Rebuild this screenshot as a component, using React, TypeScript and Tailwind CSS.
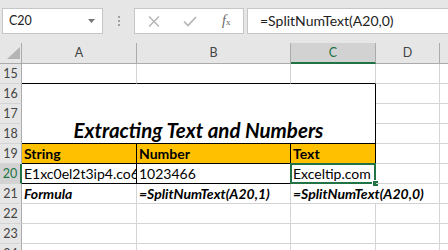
import React from "react";

const G = "border-[#d4d4d4]";

function RowHdr({ n, sel, className = "" }: { n: number; sel?: boolean; className?: string }) {
  return (
    <div
      className={
        "border-b border-[#d4d4d4] text-center text-[12.5px] leading-[19px] " +
        (sel
          ? "bg-[#d2d2d2] text-[#217346] border-r-2 border-r-[#217346] "
          : "bg-[#e6e6e6] text-[#444] border-r border-r-[#ababab] ") +
        className
      }
    >
      {n}
    </div>
  );
}

function C({ children, className = "" }: { children?: React.ReactNode; className?: string }) {
  return (
    <div
      className={
        "relative whitespace-nowrap px-[2px] text-[14px] leading-[19px] text-black " + className
      }
    >
      {children}
    </div>
  );
}

export default function App() {
  return (
    <div className="w-[448px] h-[250px] overflow-hidden bg-white font-[Lato,sans-serif]">
      {/* formula bar */}
      <div className="h-[43px] bg-[#e6e6e6] flex items-start pt-[8px] pl-[2px]">
        <div className="w-[101px] h-[26px] bg-white border border-[#c6c6c6] flex items-center justify-between pl-[6px] pr-[7px]">
          <span className="text-[12.5px] text-[#222] leading-none">C20</span>
          <svg width="7" height="4" viewBox="0 0 7 4">
            <polygon points="0,0 7,0 3.5,4" fill="#777" />
          </svg>
        </div>
        <div className="w-[31px] h-[26px] flex flex-col items-center justify-center gap-[2px]">
          <span className="w-[2px] h-[2px] bg-[#a0a0a0]" />
          <span className="w-[2px] h-[2px] bg-[#a0a0a0]" />
          <span className="w-[2px] h-[2px] bg-[#a0a0a0]" />
        </div>
        <div className="w-[110px] h-[26px] bg-white border border-[#c6c6c6] relative flex items-center">
          <svg className="ml-[13px]" width="12" height="11" viewBox="0 0 12 11">
            <path d="M1 0.5 L11 10.5 M11 0.5 L1 10.5" stroke="#b3b3b3" strokeWidth="1.4" fill="none" />
          </svg>
          <svg className="ml-[23px]" width="14" height="11" viewBox="0 0 14 11">
            <path d="M1 5.5 L5 9.5 L13 1" stroke="#b3b3b3" strokeWidth="1.6" fill="none" />
          </svg>
          <span className="ml-[25px] text-[14px] text-[#666] italic font-['Liberation_Serif',serif] leading-none">
            f<span className="text-[9px] not-italic">x</span>
          </span>
        </div>
        <div className="ml-[3px] flex-1 h-[26px] bg-white border border-[#c6c6c6] border-r-0 flex items-center pl-[12px]">
          <span className="text-[14px] text-[#222] leading-none">=SplitNumText(A20,0)</span>
        </div>
      </div>

      {/* sheet */}
      <div className="grid grid-cols-[22px_115px_154px_85px_64px_1fr] grid-rows-[21px_repeat(10,20px)]">
        {/* header row */}
        <div className="bg-[#e6e6e6] border-r border-b border-[#ababab] relative">
          <svg className="absolute left-0 top-0" width="21" height="20" viewBox="0 0 21 20">
            <polygon points="20,4 20,16 7,16" fill="#b4b4b4" />
          </svg>
        </div>
        <div className="bg-[#e6e6e6] border-r border-b border-[#ababab] text-center text-[12.5px] leading-[20px] text-[#444]">A</div>
        <div className="bg-[#e6e6e6] border-r border-b border-[#ababab] text-center text-[12.5px] leading-[20px] text-[#444]">B</div>
        <div className="bg-[#d2d2d2] border-r border-r-[#ababab] border-b-2 border-b-[#217346] text-center text-[12.5px] leading-[19px] text-[#217346]">C</div>
        <div className="bg-[#e6e6e6] border-r border-b border-[#ababab] text-center text-[12.5px] leading-[20px] text-[#444]">D</div>
        <div className="bg-[#e6e6e6] border-b border-[#ababab]" />

        {/* row 15 */}
        <RowHdr n={15} />
        <C className={`border-r ${G} border-b border-b-black`} />
        <C className={`border-r ${G} border-b border-b-black`} />
        <C className={`border-r ${G} border-b border-b-black`} />
        <C className={`border-r border-b ${G}`} />
        <C className={`border-b ${G}`} />

        {/* row 16-18 */}
        <RowHdr n={16} />
        <div className="col-span-3 row-span-3 border-r border-b border-black flex items-end justify-center pb-[2px]">
          <span className="text-[20.5px] font-bold italic leading-[22px] text-black">Extracting Text and Numbers</span>
        </div>
        <C className={`border-r border-b ${G}`} />
        <C className={`border-b ${G}`} />
        <RowHdr n={17} />
        <C className={`border-r border-b ${G}`} />
        <C className={`border-b ${G}`} />
        <RowHdr n={18} />
        <C className={`border-r border-b ${G}`} />
        <C className={`border-b ${G}`} />

        {/* row 19 */}
        <RowHdr n={19} />
        <C className="bg-[#ffc000] border-r border-b border-black font-bold">String</C>
        <C className="bg-[#ffc000] border-r border-b border-black font-bold">Number</C>
        <C className="bg-[#ffc000] border-r border-b border-black font-bold">Text</C>
        <C className={`border-r border-b ${G}`} />
        <C className={`border-b ${G}`} />

        {/* row 20 */}
        <RowHdr n={20} sel />
        <C className="border-r border-b border-black overflow-hidden">E1xc0el2t3ip4.co66</C>
        <C className="border-r border-b border-black">1023466</C>
        <C className="border-r border-b border-black">
          Exceltip.com
          <div className="absolute left-[-1px] top-[-1px] w-[86px] h-[21px] border-2 border-[#217346]" />
          <div className="absolute right-[-4px] bottom-[-4px] w-[7px] h-[7px] bg-[#217346] border border-white" />
        </C>
        <C className={`border-r border-b ${G}`} />
        <C className={`border-b ${G}`} />

        {/* row 21 */}
        <RowHdr n={21} />
        <C className={`border-r border-b ${G} font-bold italic`}>Formula</C>
        <C className={`border-r border-b ${G} font-bold italic`}>=SplitNumText(A20,1)</C>
        <C className={`border-b ${G} font-bold italic z-10`}>=SplitNumText(A20,0)</C>
        <C className={`border-r border-b ${G}`} />
        <C className={`border-b ${G}`} />

        {[22, 23, 24].map((n) => (
          <React.Fragment key={n}>
            <RowHdr n={n} />
            <C className={`border-r border-b ${G}`} />
            <C className={`border-r border-b ${G}`} />
            <C className={`border-r border-b ${G}`} />
            <C className={`border-r border-b ${G}`} />
            <C className={`border-b ${G}`} />
          </React.Fragment>
        ))}
      </div>
    </div>
  );
}
